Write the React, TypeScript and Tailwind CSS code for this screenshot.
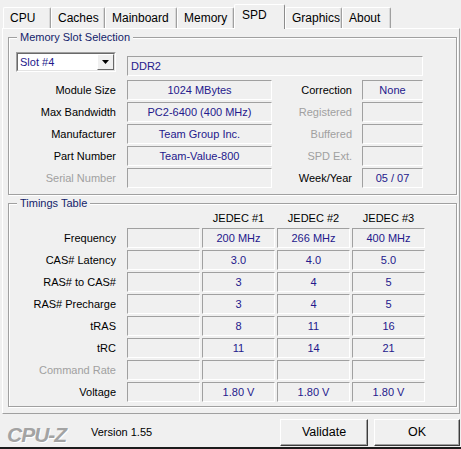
import React from "react";

const FONT = '"Liberation Sans", Arial, sans-serif';
const VAL = "text-[#24188c]";

function Field({ w, children }: { w: string; children?: React.ReactNode }) {
  return (
    <div
      className={`${w} h-[20px] shrink-0 border border-t-[#a0a0a0] border-l-[#a0a0a0] border-b-white border-r-white flex items-center justify-center ${VAL} whitespace-nowrap overflow-hidden`}
    >
      {children}
    </div>
  );
}

function Label({
  w,
  children,
  dim,
}: {
  w: string;
  children: React.ReactNode;
  dim?: boolean;
}) {
  return (
    <div
      className={`${w} shrink-0 text-right whitespace-nowrap ${
        dim ? "text-[#a0a0a0]" : "text-black"
      }`}
    >
      {children}
    </div>
  );
}

function Group({
  title,
  h,
  children,
  className,
}: {
  title: string;
  h: string;
  children: React.ReactNode;
  className?: string;
}) {
  return (
    <div
      className={`relative ml-[5px] w-[449px] ${h} border border-[#a0a0a0] shadow-[inset_1px_1px_0_#fff,1px_1px_0_#fff] ${
        className ?? ""
      }`}
    >
      <div className="absolute left-[8px] top-[-8px] px-[3px] bg-[#f0f0f0] text-[#13236a] text-[11px] leading-[14px]">
        {title}
      </div>
      {children}
    </div>
  );
}

function Tab({
  w,
  label,
  active,
}: {
  w: string;
  label: string;
  active?: boolean;
}) {
  if (active) {
    return (
      <div
        className={`${w} h-[25px] -mb-px relative z-10 bg-[#f0f0f0] border-l border-t border-l-white border-t-white border-r border-r-[#8c8c8c] rounded-t-[2px] flex items-center pl-[7px] pb-[3px] text-black`}
      >
        {label}
      </div>
    );
  }
  return (
    <div
      className={`${w} h-[21px] bg-[#f0f0f0] border-l border-t border-l-white border-t-white border-r border-r-[#a0a0a0] shadow-[inset_-1px_0_0_#d8d8d8] rounded-t-[2px] flex items-center pl-[6px] text-black`}
    >
      {label}
    </div>
  );
}

const timings: { label: string; dim?: boolean; vals: string[] }[] = [
  { label: "Frequency", vals: ["", "200 MHz", "266 MHz", "400 MHz"] },
  { label: "CAS# Latency", vals: ["", "3.0", "4.0", "5.0"] },
  { label: "RAS# to CAS#", vals: ["", "3", "4", "5"] },
  { label: "RAS# Precharge", vals: ["", "3", "4", "5"] },
  { label: "tRAS", vals: ["", "8", "11", "16"] },
  { label: "tRC", vals: ["", "11", "14", "21"] },
  { label: "Command Rate", dim: true, vals: ["", "", "", ""] },
  { label: "Voltage", vals: ["", "1.80 V", "1.80 V", "1.80 V"] },
];

const memRows: {
  l: string;
  ld?: boolean;
  v: string;
  r: string;
  rd?: boolean;
  rv: string;
}[] = [
  { l: "Module Size", v: "1024 MBytes", r: "Correction", rv: "None" },
  { l: "Max Bandwidth", v: "PC2-6400 (400 MHz)", r: "Registered", rd: true, rv: "" },
  { l: "Manufacturer", v: "Team Group Inc.", r: "Buffered", rd: true, rv: "" },
  { l: "Part Number", v: "Team-Value-800", r: "SPD Ext.", rd: true, rv: "" },
  { l: "Serial Number", ld: true, v: "", r: "Week/Year", rv: "05 / 07" },
];

export default function App() {
  return (
    <div
      className="w-[461px] h-[449px] bg-[#f0f0f0] flex flex-col overflow-hidden text-[11px] leading-[13px]"
      style={{ fontFamily: FONT }}
    >
      {/* Tabs */}
      <div className="h-[28px] shrink-0 flex items-end pl-[3px] text-[12px]">
        <Tab w="w-[48px]" label="CPU" />
        <Tab w="w-[54px]" label="Caches" />
        <Tab w="w-[72px]" label="Mainboard" />
        <Tab w="w-[57px]" label="Memory" />
        <Tab w="w-[51px]" label="SPD" active />
        <Tab w="w-[57px]" label="Graphics" />
        <Tab w="w-[49px]" label="About" />
      </div>

      {/* Panel */}
      <div className="ml-[2px] w-[458px] h-[386px] shrink-0 border border-t-white border-l-white border-r-[#a0a0a0] border-b-[#a0a0a0] pt-[8px]">
        <Group title="Memory Slot Selection" h="h-[158px]">
          <div className="pl-[7px] pt-[14px]">
            <div className="flex items-start">
              {/* Select */}
              <div className="w-[100px] h-[20px] shrink-0 border border-t-[#a0a0a0] border-l-[#a0a0a0] border-b-white border-r-white">
                <div className="w-full h-full bg-white border border-t-[#696969] border-l-[#696969] border-b-[#e3e3e3] border-r-[#e3e3e3] flex items-center">
                  <div className={`flex-1 pl-[2px] ${VAL}`}>Slot #4</div>
                  <div className="w-[17px] h-[16px] bg-[#f0f0f0] border border-t-white border-l-white border-b-[#696969] border-r-[#696969] flex items-center justify-center">
                    <svg width="7" height="4" viewBox="0 0 7 4">
                      <path d="M0 0H7L3.5 4Z" fill="#000" />
                    </svg>
                  </div>
                </div>
              </div>
              <div className="ml-[11px] mt-[4px]">
                <div className="w-[296px] h-[20px] border border-t-[#a0a0a0] border-l-[#a0a0a0] border-b-white border-r-white flex items-center pl-[3px] text-[#24188c]">
                  DDR2
                </div>
              </div>
            </div>
            <div className="mt-[4px] flex flex-col gap-[2px]">
              {memRows.map((r) => (
                <div key={r.l} className="flex items-center h-[20px]">
                  <Label w="w-[100px]" dim={r.ld}>
                    {r.l}
                  </Label>
                  <div className="ml-[11px]">
                    <Field w="w-[145px]">{r.v}</Field>
                  </div>
                  <Label w="w-[80px]" dim={r.rd}>
                    {r.r}
                  </Label>
                  <div className="ml-[10px]">
                    <Field w="w-[61px]">{r.rv}</Field>
                  </div>
                </div>
              ))}
            </div>
          </div>
        </Group>

        <Group title="Timings Table" h="h-[204px]" className="mt-[8px]">
          <div className="pl-[7px] pt-[4px]">
            <div className="flex items-center h-[20px]">
              <div className="w-[100px] shrink-0" />
              <div className="ml-[11px] flex gap-[2px]">
                {["", "JEDEC #1", "JEDEC #2", "JEDEC #3"].map((h, i) => (
                  <div key={i} className="w-[73px] text-center text-black whitespace-nowrap">
                    {h}
                  </div>
                ))}
              </div>
            </div>
            <div className="flex flex-col gap-[2px]">
              {timings.map((t) => (
                <div key={t.label} className="flex items-center h-[20px]">
                  <Label w="w-[100px]" dim={t.dim}>
                    {t.label}
                  </Label>
                  <div className="ml-[11px] flex gap-[2px]">
                    {t.vals.map((v, i) => (
                      <Field key={i} w="w-[73px]">
                        {v}
                      </Field>
                    ))}
                  </div>
                </div>
              ))}
            </div>
          </div>
        </Group>
      </div>

      {/* Bottom bar */}
      <div className="h-[33px] shrink-0 flex items-start">
        <div
          className="ml-[7px] mt-[10px] w-[84px] h-[21px] text-[21px] leading-[21px] font-bold italic tracking-[-1px] text-[#a3a3a3] [text-shadow:1px_1px_0_#ffffff]"
        >
          CPU-Z
        </div>
        <div className="mt-[12px] text-[11px] leading-[13px] text-black whitespace-nowrap">
          Version 1.55
        </div>
        <div className="ml-auto mr-[1px] mt-[5px] flex gap-[6px] text-[12.5px]">
          <button className="w-[88px] h-[27px] bg-[#f0f0f0] border border-t-white border-l-white border-b-[#3c3c3c] border-r-[#3c3c3c] shadow-[inset_-1px_-1px_0_#a0a0a0] flex items-center justify-center text-black">
            Validate
          </button>
          <button className="w-[86px] h-[27px] bg-[#f0f0f0] border border-t-white border-l-white border-b-[#3c3c3c] border-r-[#3c3c3c] shadow-[inset_-1px_-1px_0_#a0a0a0] flex items-center justify-center text-black">
            OK
          </button>
        </div>
      </div>
      <div className="h-[2px] shrink-0 bg-[#1c1c1c]" />
    </div>
  );
}
